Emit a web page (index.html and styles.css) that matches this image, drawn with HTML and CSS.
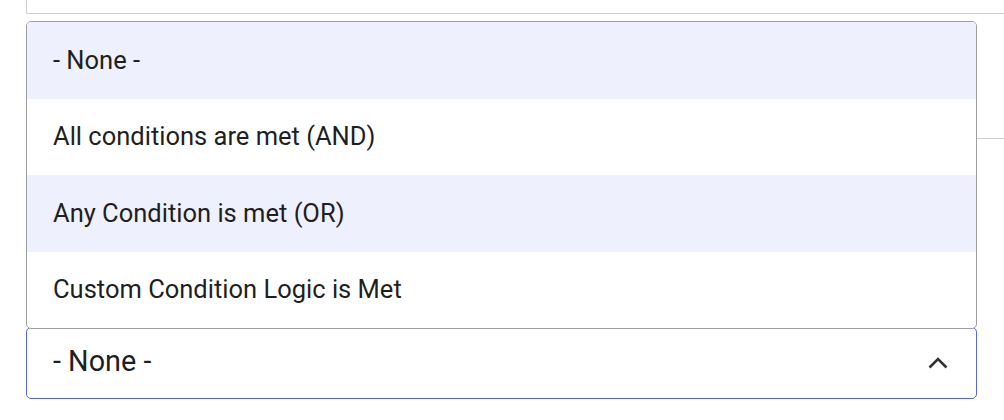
FILE: index.html
```html
<!DOCTYPE html>
<html>
<head>
<meta charset="utf-8">
<link rel="stylesheet" href="styles.css">
</head>
<body>
<div class="page">
  <div class="top-cell"></div>
  <div class="row-line"></div>
  <div class="field">
    <div class="select">
      <span class="select-value">- None -</span>
      <svg class="chevron" width="20" height="12" viewBox="0 0 20 12"><path d="M1.5 10.5 L10 2 L18.5 10.5" fill="none" stroke="#333" stroke-width="2.6"/></svg>
    </div>
    <ul class="menu">
      <li class="option active">- None -</li>
      <li class="option">All conditions are met (AND)</li>
      <li class="option active">Any Condition is met (OR)</li>
      <li class="option">Custom Condition Logic is Met</li>
    </ul>
  </div>
</div>
</body>
</html>
```
FILE: styles.css
```css
html, body {
  margin: 0;
  padding: 0;
  background: #fff;
  font-family: Roboto, "Noto Sans", sans-serif;
  color: #1f1f1f;
}
.page {
  padding-left: 26px;
  width: 978px;
  height: 420px;
  overflow: hidden;
}
.top-cell {
  height: 13px;
  border-left: 1px solid #cfcfcf;
  border-bottom: 1px solid #cfcfcf;
}
.row-line {
  height: 124px;
  border-bottom: 1px solid #cfcfcf;
}
.field {
  position: relative;
  margin-top: 188px;
  width: 951px;
}
.select {
  box-sizing: border-box;
  height: 72px;
  border: 1px solid #5563ee;
  border-radius: 5px;
  display: flex;
  align-items: center;
  justify-content: space-between;
  padding: 0 28px 4px 26px;
}
.select-value {
  font-size: 28.8px;
}
.chevron {
  display: block;
  margin-top: 4px;
}
.menu {
  position: absolute;
  left: 0;
  right: 0;
  bottom: calc(100% - 2px);
  margin: 0;
  padding: 0;
  list-style: none;
  background: #fff;
  border: 1px solid #9e9e9e;
  border-radius: 5px;
  overflow: hidden;
}
.option {
  height: 76.5px;
  display: flex;
  align-items: center;
  padding-left: 26px;
  font-size: 25.5px;
  padding-bottom: 1px;
  box-sizing: border-box;
}
.option.active {
  background: #eef0fd;
}
```
